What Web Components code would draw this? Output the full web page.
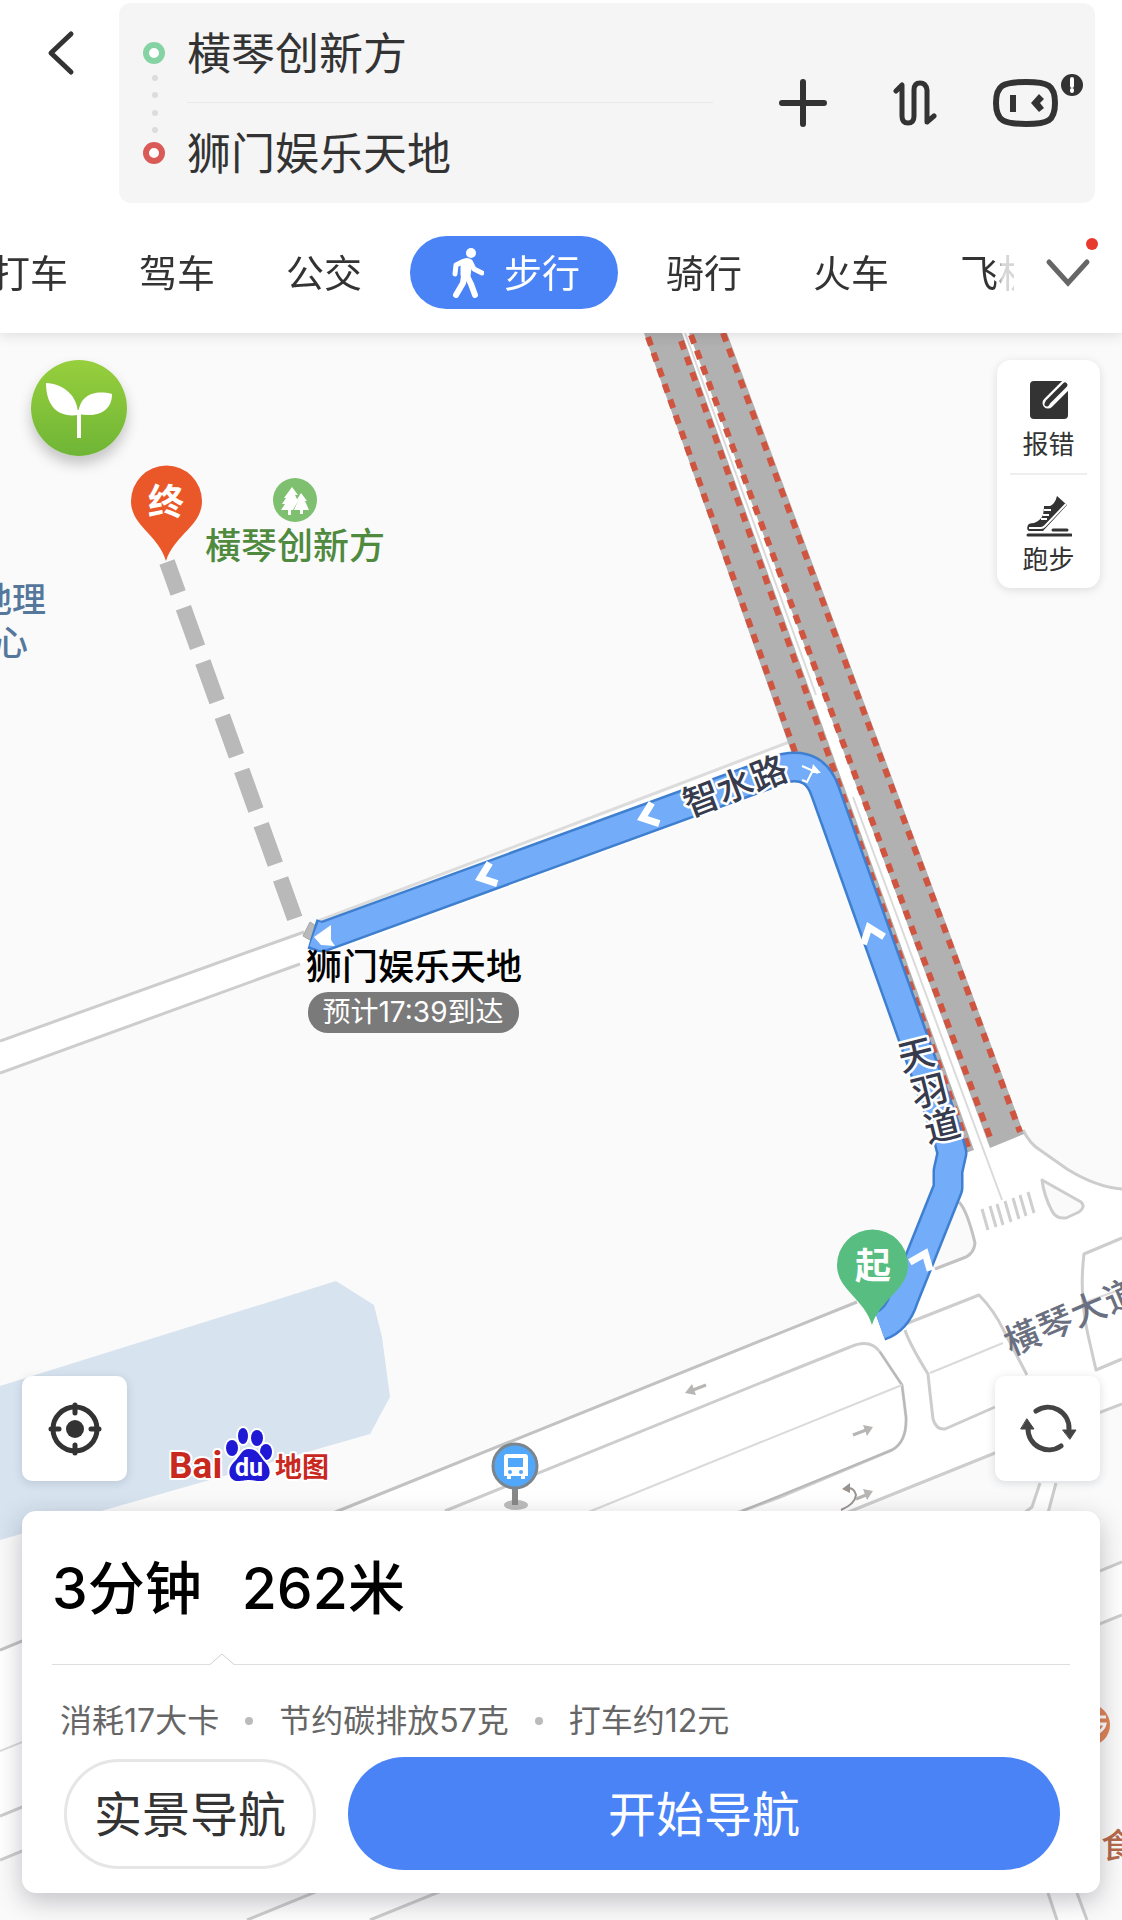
<!DOCTYPE html>
<html lang="zh-CN">
<head>
<meta charset="utf-8">
<meta name="viewport" content="width=device-width, initial-scale=1">
<title>步行路线</title>
<style>
html, body {
  margin: 0;
  min-height: 100%;
}

body {
  display: flex;
  flex-direction: column;
  min-height: 100vh;
  background: #fff;
  color: #333;
  font-family: Inter, "Noto Sans CJK SC", sans-serif;
}
</style>
</head>
<body>

<route-header>
  <route-field slot="from" label="起点" value="橫琴创新方"></route-field>
  <route-field slot="to" label="终点" value="狮门娱乐天地"></route-field>
  <mode-tab>打车</mode-tab>
  <mode-tab>驾车</mode-tab>
  <mode-tab>公交</mode-tab>
  <mode-tab active>
    <svg slot="icon" viewBox="0 0 32 50" width="32" height="50" fill="none" stroke="#fff" stroke-linecap="round" stroke-linejoin="round">
      <circle cx="19" cy="5" r="5" fill="#fff" stroke="none"/>
      <path d="M10 13q5-3 9 0l-2 15-7-1z" fill="#fff" stroke-width="3"/>
      <path d="M10 14l-6 3-1 9M19 15l3 6 8 4" stroke-width="5"/>
      <path d="M12 28l-1 7-7 12M15 28l4 8 4 11" stroke-width="6"/>
    </svg>
    步行
  </mode-tab>
  <mode-tab>骑行</mode-tab>
  <mode-tab>火车</mode-tab>
  <mode-tab>飞机</mode-tab>
</route-header>

<route-map>
  <eco-button slot="top"></eco-button>
  <tool-card slot="top">
    <tool-item>
      <svg slot="icon" viewBox="0 0 46 40" width="46" height="40" fill="none" stroke-linecap="round">
        <rect x="4" y="1" width="38" height="38" rx="4" fill="#333"/>
        <path d="M41 4L22 23" stroke="#fff" stroke-width="11"/>
        <path d="M39 5L22 22l-1 2" stroke="#333" stroke-width="5"/>
      </svg>
      报错
    </tool-item>
    <tool-item>
      <svg slot="icon" viewBox="0 0 46 42" width="46" height="42">
        <path d="M31 1l10 9-24 26H3q-3-1-1-6 1-2 6-2 6-2 9-8 1-5 1-9h6q5-2 7-10z" fill="#333"/>
        <path d="M3 33h12q2 0 4-2L40 9" fill="none" stroke="#fff" stroke-width="2"/>
        <path d="M18 15h7M17 20h6M15 24h6" stroke="#fff" stroke-width="2"/>
        <path d="M27 35h14M2 40h43" stroke="#333" stroke-width="3" stroke-linecap="round"/>
      </svg>
      跑步
    </tool-item>
  </tool-card>

  <map-button slot="controls" label="定位">
    <svg viewBox="0 0 54 54" width="54" height="54" fill="none" stroke="#333" stroke-linecap="round">
      <circle cx="27" cy="27" r="22" stroke-width="5"/>
      <circle cx="27" cy="27" r="9" fill="#333" stroke="none"/>
      <path d="M27 3v8M27 43v8M3 27h8M43 27h8" stroke-width="5"/>
    </svg>
  </map-button>
  <map-logo slot="controls"></map-logo>
  <map-button slot="controls" label="刷新">
    <svg viewBox="0 0 58 54" width="58" height="54" fill="none" stroke="#444" stroke-width="5" stroke-linecap="round">
      <path d="M17 9A21 21 0 0 1 50 27M42 44A21 21 0 0 1 9 26"/>
      <path d="M44 28h13l-6 9zM2 27h13L8 17z" fill="#444" stroke-width="1"/>
    </svg>
  </map-button>

  <trip-sheet slot="sheet">
    <span slot="time">3分钟</span>
    <span slot="distance">262米</span>
    <span slot="fact">消耗17大卡</span>
    <span slot="fact">节约碳排放57克</span>
    <span slot="fact">打车约12元</span>
    <pill-button slot="action">实景导航</pill-button>
    <pill-button slot="action" primary>开始导航</pill-button>
  </trip-sheet>
</route-map>

<script>
function define(name, html, setup) {
  const template = document.createElement('template');
  template.innerHTML = html;

  customElements.define(name, class extends HTMLElement {
    constructor() {
      super();
      this.attachShadow({ mode: 'open' });
    }

    connectedCallback() {
      if (this.shadowRoot.firstChild) return;
      this.shadowRoot.appendChild(template.content.cloneNode(true));
      if (setup) setup(this, this.shadowRoot);
    }
  });
}

define('route-header', `
<style>
:host {
  display: block;
  position: relative;
  z-index: 1;
  padding: 3px 0 24px;
  background: #fff;
  box-shadow: 0 2px 12px rgba(40, 40, 60, .14);
}

button {
  border: 0;
  padding: 0;
  background: none;
  display: flex;
  align-items: center;
  justify-content: center;
}

.search {
  display: flex;
  align-items: flex-start;
}

.back {
  width: 119px;
  height: 100px;
}

.box {
  flex: 1;
  display: flex;
  align-items: center;
  margin-right: 27px;
  padding: 0 10px 0 23px;
  border-radius: 12px;
  background: #f5f5f5;
}

.fields {
  flex: 1;
  min-width: 0;
  margin-left: 21px;
}

.fields hr {
  height: 1px;
  border: 0;
  margin: -1px 0 0;
  background: #e8e8e8;
}

.actions {
  display: flex;
  gap: 56px;
  margin-left: 56px;
}

.modes {
  display: flex;
  align-items: center;
  margin-top: 33px;
}

nav {
  flex: 1;
  min-width: 0;
  display: flex;
  align-items: center;
  gap: 71px;
  overflow: hidden;
  -webkit-mask-image: linear-gradient(to left, rgba(0, 0, 0, .2) 12px, #000 18px);
  mask-image: linear-gradient(to left, rgba(0, 0, 0, .2) 12px, #000 18px);
}

nav slot {
  display: contents;
}

/* the strip is scrolled a little to the left */
nav::before {
  content: "";
  flex: none;
  margin-left: -79px;
}

.more {
  width: 108px;
  height: 73px;
}
</style>
<div class="search">
  <button class="back" aria-label="返回">
    <svg viewBox="0 0 30 46" width="30" height="46" fill="none" stroke="#333" stroke-width="5" stroke-linecap="round" stroke-linejoin="round"><path d="M26 4L6 23l20 19"/></svg>
  </button>
  <div class="box">
    <svg viewBox="0 0 24 200" width="24" height="200" fill="none">
      <circle cx="12" cy="50" r="8" stroke="#85d3a2" stroke-width="6" fill="#fff"/>
      <g fill="#dcdcdf"><circle cx="13" cy="75" r="3"/><circle cx="13" cy="92" r="3"/><circle cx="13" cy="110" r="3"/><circle cx="13" cy="127" r="3"/></g>
      <circle cx="12" cy="150" r="8" stroke="#d95a56" stroke-width="6" fill="#fff"/>
    </svg>
    <div class="fields">
      <slot name="from"></slot>
      <hr>
      <slot name="to"></slot>
    </div>
    <div class="actions">
      <button aria-label="添加途经点">
        <svg viewBox="0 0 68 60" width="68" height="60" stroke="#333" stroke-width="6" stroke-linecap="round"><path d="M34 9v42M13 30h42"/></svg>
      </button>
      <button aria-label="交换起终点">
        <svg viewBox="0 0 44 48" width="44" height="48" fill="none" stroke="#333" stroke-width="5" stroke-linecap="round" stroke-linejoin="round"><path d="M3 12l6-6v31q0 7 6 7t6-7V11q0-7 6-7t7 7v32l7-6"/></svg>
      </button>
      <button aria-label="语音助手">
        <svg viewBox="0 3 92 60" width="92" height="60">
          <path d="M33 12c22 0 29 3 29 21s-7 21-29 21S3 51 3 33s7-21 30-21z" fill="none" stroke="#333" stroke-width="6"/>
          <path d="M17 25h6v17h-6z" fill="#333"/>
          <path d="M38 33l8-9 5 5-4 4 4 5-5 4z" fill="#333"/>
          <circle cx="79" cy="15" r="11" fill="#333"/>
          <path d="M79 9v7M79 20v1" stroke="#fff" stroke-width="4" stroke-linecap="round"/>
        </svg>
      </button>
    </div>
  </div>
</div>
<div class="modes">
  <nav><slot></slot></nav>
  <button class="more" aria-label="更多">
    <svg viewBox="0 0 60 73" width="60" height="73" fill="none">
      <path d="M11 26l19 21 19-21" stroke="#666" stroke-width="5" stroke-linecap="round"/>
      <circle cx="54" cy="8" r="6" fill="#e8392f"/>
    </svg>
  </button>
</div>
`);

define('route-field', `
<style>
:host {
  display: block;
  height: 100px;
}

input {
  display: block;
  width: 100%;
  height: 100%;
  box-sizing: border-box;
  border: 0;
  padding: 0 0 4px;
  background: none;
  color: #333;
  font: inherit;
  font-size: 44px;
  outline: 0;
}
</style>
<input type="text">
`, (host, root) => {
  const input = root.querySelector('input');
  input.value = host.getAttribute('value');
  input.setAttribute('aria-label', host.getAttribute('label'));
});

define('mode-tab', `
<style>
:host {
  display: block;
  flex: none;
}

:host([active]) {
  margin: 0 -23px;
}

button {
  display: flex;
  align-items: center;
  height: 73px;
  border: 0;
  padding: 0;
  background: none;
  color: #333;
  font: inherit;
  font-size: 38px;
  white-space: nowrap;
}

.label {
  padding-bottom: 4px;
}

:host([active]) button {
  gap: 20px;
  padding: 0 38px 0 42px;
  border-radius: 37px;
  background: #4a83f6;
  color: #fff;
}
</style>
<button><slot name="icon"></slot><span class="label"><slot></slot></span></button>
`);

define('eco-button', `
<style>
:host { display: block; }

button {
  display: block;
  width: 96px;
  height: 96px;
  margin-left: 9px;
  border: 0;
  padding: 0;
  border-radius: 50%;
  background: linear-gradient(#97cf3d, #6fb536);
  box-shadow: 0 8px 14px rgba(0, 0, 0, .22);
}
</style>
<button aria-label="绿色出行">
  <svg viewBox="0 0 96 96" width="96" height="96" fill="#fff">
    <path d="M15 23c17 1 32 12 32 32-22 3-32-11-32-32z"/>
    <path d="M47 54c2-20 17-24 34-20 0 17-14 24-34 20z"/>
    <path d="M46 50h4v28h-4z"/>
  </svg>
</button>
`);

define('tool-card', `
<style>
:host {
  display: block;
  width: 103px;
  box-sizing: border-box;
  padding: 0 13px;
  border-radius: 14px;
  background: #fff;
  box-shadow: 0 2px 10px rgba(0, 0, 0, .12);
}

::slotted(tool-item:first-child) {
  border-bottom: 2px solid #eee;
}
</style>
<slot></slot>
`);

define('tool-item', `
<style>
:host { display: block; }

button {
  display: flex;
  flex-direction: column;
  align-items: center;
  width: 100%;
  height: 113px;
  border: 0;
  padding: 20px 0 0;
  background: none;
  color: #333;
  font: inherit;
  font-size: 26px;
  line-height: 42px;
}

.icon {
  height: 44px;
}

::slotted(svg) {
  display: block;
}
</style>
<button><span class="icon"><slot name="icon"></slot></span><span><slot></slot></span></button>
`);

define('map-button', `
<style>
:host { display: block; }

button {
  display: flex;
  align-items: center;
  justify-content: center;
  width: 105px;
  height: 105px;
  border: 0;
  padding: 0;
  border-radius: 10px;
  background: #fff;
  box-shadow: 0 2px 10px rgba(40, 50, 80, .16);
}
</style>
<button><slot></slot></button>
`, (host, root) => {
  root.querySelector('button').setAttribute('aria-label', host.getAttribute('label'));
});

define('map-logo', `
<style>
:host {
  display: block;
  flex: 1;
}

svg {
  display: block;
  overflow: visible;
}

text {
  font-weight: 700;
  paint-order: stroke;
  stroke: #fff;
  stroke-width: 4px;
  stroke-linejoin: round;
}

.latin { font-family: Roboto, "Liberation Sans", sans-serif; }
.cjk { font-family: "Noto Sans CJK SC", sans-serif; }
</style>
<svg viewBox="0 0 170 54" width="170" height="54">
  <text class="latin" x="1" y="51" font-size="37" fill="#c8281e">Bai</text>
  <g fill="#1f18d4" stroke="#fff" stroke-width="4" paint-order="stroke">
    <ellipse cx="64" cy="21" rx="6" ry="8"/>
    <ellipse cx="75" cy="9" rx="5" ry="8"/>
    <ellipse cx="89" cy="11" rx="6" ry="8"/>
    <ellipse cx="98" cy="25" rx="6" ry="8"/>
    <path d="M81 22c9 0 11 8 16 13 8 8 5 19-4 19-5 0-8-1-12-1s-6 1-11 1c-9 0-12-11-4-19 6-5 7-13 15-13z"/>
  </g>
  <text class="latin" x="67" y="49" font-size="25" fill="#fff" style="stroke: none">du</text>
  <text class="cjk" x="107" y="50" font-size="27" fill="#c8281e">地图</text>
</svg>
`);

define('pill-button', `
<style>
:host { display: block; }
:host([primary]) { flex: 1; }

button {
  display: block;
  width: 100%;
  height: 110px;
  box-sizing: border-box;
  border: 3px solid #e6e6e6;
  border-radius: 57px;
  padding: 0 27px 5px;
  background: #fff;
  color: #333;
  font: inherit;
  font-size: 48px;
}

:host([primary]) button {
  height: 113px;
  border: 0;
  background: #4a83f6;
  color: #fff;
}
</style>
<button><slot></slot></button>
`);

define('trip-sheet', `
<style>
:host {
  display: block;
  padding: 36px 30px 23px;
  border-radius: 14px;
  background: #fff;
  box-shadow: 0 8px 26px rgba(30, 30, 50, .26);
}

.summary {
  display: flex;
  gap: 40px;
  color: #000;
  font-size: 57px;
  font-weight: 500;
  line-height: 84px;
}

.divider {
  display: flex;
  margin-top: 22px;
  height: 12px;
}

.divider::before,
.divider::after {
  content: "";
  box-sizing: border-box;
  width: 158px;
  border-bottom: 1px solid #dedede;
}

.divider::after {
  flex: 1;
}

.facts {
  display: flex;
  margin: 32px 0 12px;
  padding-left: 8px;
  color: #666;
  font-size: 32px;
  line-height: 48px;
}

::slotted([slot="fact"]:not(:nth-child(3))) {
  display: flex;
  align-items: center;
}

.actions {
  display: flex;
  align-items: center;
  gap: 32px;
  padding: 0 10px 0 12px;
}
</style>
<div class="summary"><slot name="time"></slot><slot name="distance"></slot></div>
<div class="divider">
  <svg viewBox="0 0 24 12" width="24" height="12" fill="none" stroke="#cfcfcf"><path d="M0 11.500L12 1l12 10.500"/></svg>
</div>
<div class="facts"><slot name="fact"></slot></div>
<div class="actions"><slot name="action"></slot></div>
`, (host) => {
  // a dot goes in front of every fact but the first
  host.querySelectorAll('[slot="fact"]').forEach((fact, i) => {
    if (i === 0) return;
    const dot = document.createElement('i');
    dot.style.cssText = 'width: 8px; height: 8px; border-radius: 50%; background: #bbb; margin: 0 26px';
    fact.prepend(dot);
  });
});

define('route-map', `
<style>
:host {
  display: flex;
  flex: 1;
  flex-direction: column;
  position: relative;
  overflow: hidden;
  box-sizing: border-box;
  min-height: 1200px;
  padding: 27px 22px;
  background: #fafafa;
}

/* everything else floats over the drawn map */
.canvas {
  position: absolute;
  inset: 0;
  width: 100%;
  height: 100%;
}

.top,
.controls,
.sheet {
  position: relative;
  display: flex;
}

.top {
  justify-content: space-between;
  align-items: flex-start;
}

.controls {
  align-items: flex-end;
  gap: 41px;
  margin: auto 0 30px;
}

.sheet {
  display: block;
}

text {
  font-family: Inter, "Noto Sans CJK SC", sans-serif;
  dominant-baseline: central;
}

.halo text {
  fill: #363b4e;
  font-weight: 500;
  paint-order: stroke;
  stroke: #fff;
  stroke-width: 5px;
  stroke-linejoin: round;
}

.curb {
  fill: none;
  stroke: #cdcdcd;
  stroke-width: 3;
  stroke-linejoin: round;
}

.thin {
  fill: none;
  stroke: #dadada;
  stroke-width: 2;
}
</style>
<svg class="canvas" viewBox="0 333 1122 1587" preserveAspectRatio="xMidYMid slice">
  <!-- water -->
  <path d="M0 1386L336 1281 374 1305 382 1337 390 1397 370 1434 0 1540z" fill="#d7e3ef"/>

  <!-- road surfaces -->
  <g fill="#fff">
    <path d="M0 1041L304 932 789 743 800 780 300 964 0 1073z"/>
    <path d="M680 333h12L1023 1130 1033 1144 1067 1169 1100 1185 1122 1189V1404L995 1453 851 1511 0 1860V1650L857 1302 935 1269 975 1243 940 1160z"/>
    <path d="M1122 1562L247 1920H370L1122 1615z"/>
    <path d="M1040 1483L1032 1507 1010 1600 1048 1893 1057 1920H1087L1077 1893 1030 1600 1056 1483z"/>
  </g>
  <path d="M959 1202Q967 1210 975 1243 974 1253 966 1257L935 1269 925 1250z" fill="#fafafa"/>
  <g class="curb">
    <path d="M0 1041L304 932M0 1073L300 964"/>
    <path d="M318 921L640 799 792 741" stroke="#dcdcdc"/>
    <path d="M1023 1130Q1030 1144 1040 1150L1067 1169Q1096 1187 1122 1189"/>
    <path d="M1042 1180L1081 1202Q1086 1207 1079 1212L1066 1218Q1056 1219 1052 1211 1044 1196 1042 1180z" fill="#fafafa"/>
    <path d="M959 1202Q967 1210 975 1243 974 1253 966 1257L935 1269" stroke="#c2c2c2"/>
    <path d="M1122 1238L1084 1254Q1079 1295 1088 1335L1096 1370 1122 1359"/>
    <path d="M903 1325L979 1295Q994 1310 1004 1331L1027 1375M905 1330Q909 1343 928 1374L930 1393 933 1419Q936 1430 945 1429L995 1407"/>
    <path d="M0 1650L338 1511 857 1302" stroke="#c2c2c2"/>
    <path d="M445 1511L780 1375 850 1347Q870 1338 880 1352L902 1385 906 1417Q907 1442 892 1450L780 1497 742 1511"/>
    <path d="M0 1860L851 1511 995 1453 1122 1404"/>
    <path d="M0 1816L742 1511"/>
    <path d="M880 1352L902 1385 906 1417Q907 1442 892 1450L742 1511" stroke="#b8b8b8" stroke-width="2"/>
    <path d="M1122 1562L247 1920M1122 1615L370 1920"/>
    <path d="M1040 1483L1032 1507 1024 1513M1056 1483L1048 1513M1048 1893L1057 1920M1077 1893L1087 1920"/>
  </g>
  <path class="thin" d="M902 1385L591 1511 0 1751M930 1373L1003 1343M1083 1303L1122 1289"/>
  <path d="M982 1209l6 21M990 1206l6 21M997 1204l6 21M1005 1201l6 21M1013 1198l6 21M1020 1195l6 21M1028 1192l6 21" stroke="#cfcfcf" stroke-width="3"/>

  <!-- lane arrows -->
  <g fill="#b8b6b4" stroke="#b8b6b4">
    <path d="M853 1435L866 1430" stroke-width="3"/><path d="M863 1425L873 1427 867 1436z" stroke="none"/>
    <path d="M856 1499L866 1495" stroke-width="3"/><path d="M863 1489L873 1491 867 1500z" stroke="none"/>
    <path d="M841 1510Q855 1504 856 1495 854 1487 847 1488" fill="none" stroke="#999390" stroke-width="2"/><path d="M842 1489L850 1483V1493z" stroke="none" fill="#999390"/>
    <path d="M706 1385L693 1390" stroke-width="3"/><path d="M685 1393L692 1384 696 1395z" stroke="none"/>
  </g>

  <!-- highway under construction -->
  <path d="M644 333H682L974 1150 960 1155 812 765 793 757z" fill="#b1b1b1"/>
  <path d="M689 333H727L1024 1134 990 1148z" fill="#b1b1b1"/>
  <path class="thin" d="M685 333L816 695M853 797L1002 1200"/>
  <g stroke="#cf5540" stroke-width="6" stroke-dasharray="9 7.600" fill="none">
    <path d="M648 337L795 752"/>
    <path d="M681 341L970 1152"/>
    <path d="M691 335L991 1140"/>
    <path d="M723 333L1020 1132"/>
  </g>

  <!-- straight line to the destination -->
  <path d="M167 562L295 919" stroke="#b9b9b9" stroke-width="16" stroke-dasharray="42 15.600" stroke-dashoffset="9"/>
  <path d="M310 922l6 4-6 14-7-4z" fill="#b9b9b9" stroke="#a4a4a4"/>

  <!-- walking route -->
  <g fill="none" stroke-linejoin="round">
    <path d="M880 1326Q897 1320 904 1298L948 1188 948 1171 952 1153 946 1130 839 830 825 791Q815 762 785 768L322 937 312 934" stroke="#3f7fd0" stroke-width="31"/>
    <path d="M880 1326Q897 1320 904 1298L948 1188 948 1171 952 1153 946 1130 839 830 825 791Q815 762 785 768L322 937 314 934" stroke="#73acf8" stroke-width="26"/>
  </g>
  <g fill="none" stroke="#fff" stroke-width="7">
    <path d="M8-11L-6 0 8 11" transform="translate(648 816) rotate(-20)"/>
    <path d="M8-11L-6 0 8 11" transform="translate(486 876) rotate(-20)"/>
    <path d="M8-11L-6 0 8 11" transform="translate(871 933) rotate(70)"/>
    <path d="M8-11L-6 0 8 11" transform="translate(923 1259) rotate(112)"/>
  </g>
  <path d="M314 937L331 925V940L335 946 321 945zM813 764L821 773 811 773z" fill="#fff"/>
  <path d="M802 766L818 773M813 770L807 782 802 780" fill="none" stroke="#fff" stroke-width="2"/>

  <g class="halo" font-size="36" text-anchor="middle">
    <text x="735" y="786" transform="rotate(-21 735 786)">智水路</text>
    <text x="916" y="1055" transform="rotate(-14 916 1055)">天</text>
    <text x="929" y="1091" transform="rotate(-14 929 1091)">羽</text>
    <text x="942" y="1126" transform="rotate(-14 942 1126)">道</text>
  </g>
  <text x="1006 1042 1078 1114" y="1344" font-size="35" font-weight="500" fill="#6b7080" transform="rotate(-23 1006 1344)">橫琴大道</text>

  <!-- places -->
  <g font-weight="500">
    <text x="295" y="546" font-size="36" text-anchor="middle" fill="#4f8a3f">橫琴创新方</text>
    <g fill="#56779c" font-size="34" text-anchor="end">
      <text x="46" y="599">地理</text>
      <text x="28" y="642">心</text>
    </g>
    <text x="1101" y="1845" font-size="34" fill="#b5694a">食</text>
  </g>
  <circle cx="295" cy="500" r="22" fill="#7ec06f"/>
  <path d="M292 487l6 8h-3l3 6-5 9h-2v5h-3v-5h-7l4-6h-3l4-6h-2zM301 493l6 8h-2l4 9h-6v4h-3v-4h-6l4-9h-2z" fill="#fff"/>
  <circle cx="1089" cy="1725" r="21" fill="#df8458"/>
  <path d="M1100 1717h6M1100 1724h5q-1 5-6 8" fill="none" stroke="#fff" stroke-width="3"/>

  <!-- bus stop -->
  <ellipse cx="516" cy="1505" rx="12" ry="5" fill="#bdbdbd"/>
  <path d="M515 1488v17" stroke="#888" stroke-width="6"/>
  <circle cx="515" cy="1466" r="22" fill="#51a7fa" stroke="#7d858c" stroke-width="3"/>
  <path d="M507 1454h18q3 0 3 3v19h-3v3h-4v-3h-10v3h-4v-3h-3v-19q0-3 3-3z" fill="#fff"/>
  <path d="M508 1458h15v9h-15z" fill="#51a7fa"/>
  <circle cx="510" cy="1472" r="2" fill="#51a7fa"/><circle cx="521" cy="1472" r="2" fill="#51a7fa"/>

  <!-- start and end pins -->
  <g font-weight="700" font-size="36" text-anchor="middle">
    <path d="M166 561C158 534 131 526 131 501a35 35 0 0 1 71 0C202 526 175 534 166 561z" fill="#ea5829"/>
    <text x="166" y="502" fill="#fff">终</text>
    <path d="M872 1325C864 1298 837 1290 837 1265a35 35 0 0 1 71 0C908 1290 881 1298 872 1325z" fill="#58bd80"/>
    <text x="873" y="1266" fill="#fff">起</text>
  </g>

  <!-- arrival label -->
  <text x="414" y="967" font-size="36" font-weight="500" text-anchor="middle" fill="#000">狮门娱乐天地</text>
  <rect x="308" y="992" width="211" height="41" rx="20" fill="#7a7a7a"/>
  <text x="413" y="1012" font-size="28" text-anchor="middle" fill="#fff">预计17:39到达</text>
</svg>
<div class="top"><slot name="top"></slot></div>
<div class="controls"><slot name="controls"></slot></div>
<div class="sheet"><slot name="sheet"></slot></div>
`);
</script>
</body>
</html>
